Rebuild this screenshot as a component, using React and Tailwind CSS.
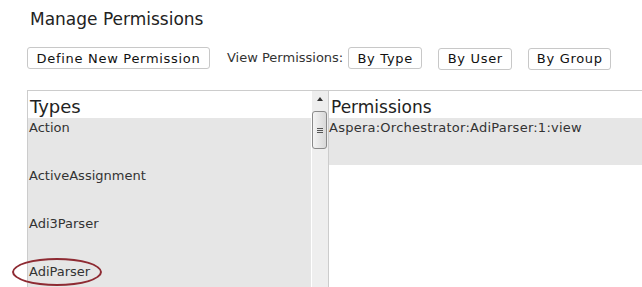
const types = ['Action', 'ActiveAssignment', 'Adi3Parser', 'AdiParser'];

function Btn({ children, w }) {
  return (
    <button className={`${w} h-[22px] border border-[#c8c8c8] rounded-[3px] bg-white text-[13px] tracking-[0.7px] text-[#111] leading-none text-center`}>
      {children}
    </button>
  );
}

export default function App() {
  return (
    <div className="w-[642px] h-[287px] overflow-hidden bg-white text-[#333]" style={{ fontFamily: '"DejaVu Sans", Verdana, sans-serif' }}>
      <h1 className="pl-[30px] pt-[9px] text-[17px] leading-[20px] text-[#222]">Manage Permissions</h1>

      <div className="flex items-center pl-[27px] mt-[18px] h-[22px]">
        <Btn w="w-[183px]">Define New Permission</Btn>
        <span className="ml-[17px] mr-[5px] text-[13px] text-[#333]">View Permissions:</span>
        <Btn w="w-[74px]">By Type</Btn>
        <div className="ml-[16px]"><Btn w="w-[74px]">By User</Btn></div>
        <div className="ml-[16px]"><Btn w="w-[83px]">By Group</Btn></div>
      </div>

      <div className="ml-[27px] mt-[21px] flex border-t border-l border-[#cccccc] h-[200px]">
        <div className="w-[283px] flex flex-col">
          <div className="h-[27px] pl-[2px] pt-[5px] text-[18px] leading-[22px] text-[#222]">Types</div>
          <div className="flex-1 bg-[#e6e6e6]">
            {types.map((t) => (
              <div key={t} className="relative h-[48px] pl-[1px] pt-[2px] text-[13px] leading-[16px]">
                {t}
                {t === 'AdiParser' && (
                  <div className="absolute left-[-16px] top-[-4px] w-[90px] h-[28px] rounded-[50%] border-2 border-[#8e2b33]"></div>
                )}
              </div>
            ))}
          </div>
        </div>

        <div className="relative w-[17px] border-l border-white bg-[#eeeeee]">
          <div className="absolute left-[5px] top-[6px] w-0 h-0 border-l-[3px] border-r-[3px] border-b-[4px] border-l-transparent border-r-transparent border-b-[#333]"></div>
          <div className="absolute left-[0px] top-[20px] w-[15px] h-[38px] rounded-[3px] border border-[#8a8a8a] bg-gradient-to-r from-[#f4f4f4] to-[#d8d8d8] flex flex-col items-center justify-center gap-[1px]">
            <div className="w-[6px] h-px bg-[#555]"></div>
            <div className="w-[6px] h-px bg-[#555]"></div>
            <div className="w-[6px] h-px bg-[#555]"></div>
          </div>
        </div>

        <div className="flex-1 flex flex-col border-l border-[#cccccc]">
          <div className="h-[27px] pl-[2px] pt-[5px] text-[17px] leading-[22px] text-[#222]">Permissions</div>
          <div className="h-[47px] bg-[#e6e6e6] pt-[2px] text-[13px] leading-[16px] tracking-[0.25px]">Aspera:Orchestrator:AdiParser:1:view</div>
        </div>
      </div>
    </div>
  );
}
